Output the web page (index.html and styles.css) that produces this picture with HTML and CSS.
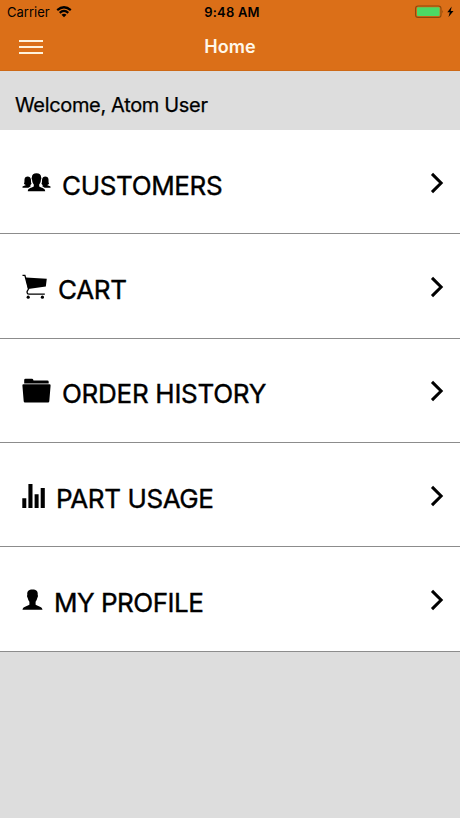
FILE: index.html
```
<!DOCTYPE html>
<html lang="en">
<head>
  <meta charset="UTF-8" />
  <meta name="viewport" content="width=device-width, initial-scale=1.0"/>
  <title>Home</title>
  <link rel="stylesheet" href="styles.css">
</head>

<body>
  <header class="header">
    <div class="status-bar">
      <div class="carrier">
        <span class="carrier-name">Carrier</span>
        <svg width="16" height="12" viewBox="0 0 16 12">
          <path d="M1.2 4.2Q8 -1.7 14.8 4.2M3.7 6.8Q8 3.1 12.3 6.8" fill="none" stroke="#000" stroke-width="2.2"/>
          <path d="M5.5 8.7Q8 6.8 10.5 8.7L8 11.2Z"/>
        </svg>
      </div>
      <span class="time">9:48 AM</span>
      <div class="battery">
        <svg width="40" height="14" viewBox="0 0 40 14">
          <rect x="0.6" y="1" width="25.4" height="11.4" rx="2.5" fill="none" stroke="#8b4a0c" stroke-width="1.1"/>
          <rect x="2" y="2.3" width="22.6" height="8.8" rx="1" fill="#4cd964"/>
          <path d="M27.3 4.8Q28.8 6.7 27.3 8.6Z" fill="#8b4a0c"/>
          <path d="M36.7 1.5L32.3 7.2H34.8L33.5 12L38.5 5.9H35.7Z"/>
        </svg>
      </div>
    </div>
    <nav class="nav-bar">
      <button class="menu-button" aria-label="Menu">
        <span></span>
        <span></span>
        <span></span>
      </button>
      <h1>Home</h1>
    </nav>
  </header>

  <p class="welcome">Welcome, Atom User</p>

  <ul class="menu">
    <li class="menu-item">
      <svg class="icon" width="29" height="30" viewBox="0 0 29 30">
        <path d="M.5 17.8V16.5L4 15C2.7 14.5 1.9 14 2 13.2C2.8 12.5 2.2 10.6 2.6 8.8C3 7.2 4.2 6.4 5.7 6.4C7.5 6.4 8.7 7.5 8.9 9.2C9.1 11 8.8 12.5 9.5 13.4C9.4 14.3 8.7 14.8 7.8 15.1L9 16L6.3 17.8Z"/>
        <path d="M28.5 17.8V16.5L25 15C26.3 14.5 27.1 14 27 13.2C26.2 12.5 26.8 10.6 26.4 8.8C26 7.2 24.8 6.4 23.3 6.4C21.5 6.4 20.3 7.5 20.1 9.2C19.9 11 20.2 12.5 19.5 13.4C19.6 14.3 20.3 14.8 21.2 15.1L20 16L22.7 17.8Z"/>
        <path d="M5.8 21.3C6 18 9.2 18.2 11.8 16.6V14.5C10.8 13.3 10.2 11.8 10.1 9.7C9.4 8.8 9.6 8 9.9 7.3C9.9 4.5 11.6 3.2 14.5 3.2C17.4 3.2 19.1 4.5 19.1 7.3C19.4 8 19.6 8.8 18.9 9.7C18.8 11.8 18.2 13.3 17.2 14.5V16.6C19.8 18.2 23 18 23.2 21.3Z"/>
      </svg>
      <span class="label customers">CUSTOMERS</span>
      <svg class="chevron" width="14" height="22" viewBox="0 0 14 22">
        <path d="M2 1.9L11.1 11L2 20.1"/>
      </svg>
    </li>
    <li class="menu-item">
      <svg class="icon" width="25" height="30" viewBox="0 0 25 30">
        <path d="M3.6 3.4L24.8 4.8L23.8 12.6L6.1 15Z"/>
        <path d="M.5 1.4H2.9L6.5 15L5.1 17.5V18.5Q5.1 20.2 7 20.2H22.8" fill="none" stroke="#000" stroke-width="1.3"/>
        <circle cx="6.2" cy="23.2" r="1.6"/>
        <circle cx="20.4" cy="23.2" r="1.6"/>
      </svg>
      <span class="label cart">CART</span>
      <svg class="chevron" width="14" height="22" viewBox="0 0 14 22">
        <path d="M2 1.9L11.1 11L2 20.1"/>
      </svg>
    </li>
    <li class="menu-item">
      <svg class="icon" width="29" height="30" viewBox="0 0 29 30">
        <path d="M2.2 5.4V2Q2.2.8 3.5.8H10.2Q11.2.8 11.5 2.5H25.3Q26.7 2.5 26.7 3.8V5.4Z"/>
        <path d="M1.5 6.2H27.5Q28.7 6.2 28.6 7.4L27.3 23.3Q27.2 24.5 26 24.5H3Q1.8 24.5 1.7 23.3L.4 7.4Q.3 6.2 1.5 6.2Z"/>
      </svg>
      <span class="label orders">ORDER HISTORY</span>
      <svg class="chevron" width="14" height="22" viewBox="0 0 14 22">
        <path d="M2 1.9L11.1 11L2 20.1"/>
      </svg>
    </li>
    <li class="menu-item">
      <svg class="icon" width="23" height="30" viewBox="0 0 23 30">
        <path d="M.3 15.3H4.3V25H.3ZM6.4 1H10.5V25H6.4ZM12.6 11.2H16.6V25H12.6ZM18.7 5H22.8V25H18.7Z"/>
      </svg>
      <span class="label usage">PART USAGE</span>
      <svg class="chevron" width="14" height="22" viewBox="0 0 14 22">
        <path d="M2 1.9L11.1 11L2 20.1"/>
      </svg>
    </li>
    <li class="menu-item">
      <svg class="icon" width="21" height="30" viewBox="0 0 21 30">
        <path d="M.5 22.8C.8 19.2 4.8 19.6 7.4 17.7V14.8C6.4 13.6 5.9 12.3 5.7 10.8C4.9 10.2 4.9 8.7 5.3 7.8C4.8 4.1 6.8 2.4 10.5 2.4C14.2 2.4 16.2 4.1 15.7 7.8C16.1 8.7 16.1 10.2 15.3 10.8C15.1 12.3 14.6 13.6 13.6 14.8V17.7C16.2 19.6 20.2 19.2 20.5 22.8Z"/>
      </svg>
      <span class="label profile">MY PROFILE</span>
      <svg class="chevron" width="14" height="22" viewBox="0 0 14 22">
        <path d="M2 1.9L11.1 11L2 20.1"/>
      </svg>
    </li>
  </ul>
</body>
</html>
```

FILE: styles.css
```
:root {
  --accent: #db6f18;
  --background: #dddddd;
  --border: #8c8c8c;
}

* {
  box-sizing: border-box;
}

body {
  margin: 0;
  background-color: var(--background);
  color: #000;
  font-family: Inter, sans-serif;
}

.header {
  height: 71px;
  background-color: var(--accent);
  border-bottom: 1px solid #cd6917;
}

/* Phone status bar */
.status-bar {
  display: grid;
  grid-template-columns: 1fr auto 1fr;
  align-items: center;
  height: 24px;
  padding: 0 5px 0 7px;
}

.carrier {
  display: flex;
  align-items: center;
  gap: 6px;
}

.carrier-name {
  font-size: 13px;
  letter-spacing: 0;
}

.time {
  padding-left: 2px;
  font-size: 13px;
  font-weight: 600;
  letter-spacing: 0.2px;
}

.battery {
  display: flex;
  justify-content: flex-end;
}

.nav-bar {
  display: grid;
  grid-template-columns: 1fr auto 1fr;
  align-items: center;
  height: 45px;
  padding: 0 19px;
}

.menu-button {
  display: flex;
  flex-direction: column;
  gap: 4px;
  width: 24px;
  padding: 0;
  border: none;
  background: none;
}

.menu-button span {
  height: 2px;
  background-color: #fff3dc;
}

h1 {
  margin: 0;
  color: #fff8ea;
  font-size: 18px;
  font-weight: 600;
  letter-spacing: 0.1px;
}

.welcome {
  height: 59px;
  margin: 0;
  padding: 5px 15px 0;
  font-size: 20px;
  line-height: 59px;
  letter-spacing: -0.34px;
  -webkit-text-stroke: 0.25px #000;
}

.menu {
  list-style: none;
  margin: 0;
  padding: 0;
}

.menu-item {
  display: flex;
  align-items: center;
  height: 104.35px;
  padding: 0 16px 0 22px;
  background-color: #fff;
  border-bottom: 1px solid var(--border);
}

.icon {
  flex: none;
  margin-top: 6px;
}

.label {
  flex-grow: 1;
  margin: 8px 0 0 11px;
  font-size: 26px;
  line-height: 32px;
  white-space: nowrap;
  -webkit-text-stroke: 0.4px #000;
}

.customers {
  letter-spacing: -0.35px;
}

.cart {
  letter-spacing: -0.3px;
}

.orders {
  letter-spacing: -0.28px;
}

.usage {
  letter-spacing: -0.4px;
}

.profile {
  letter-spacing: -0.5px;
}

.chevron {
  flex: none;
  margin-top: 2px;
}

.chevron path {
  fill: none;
  stroke: #000;
  stroke-width: 3;
}
```
